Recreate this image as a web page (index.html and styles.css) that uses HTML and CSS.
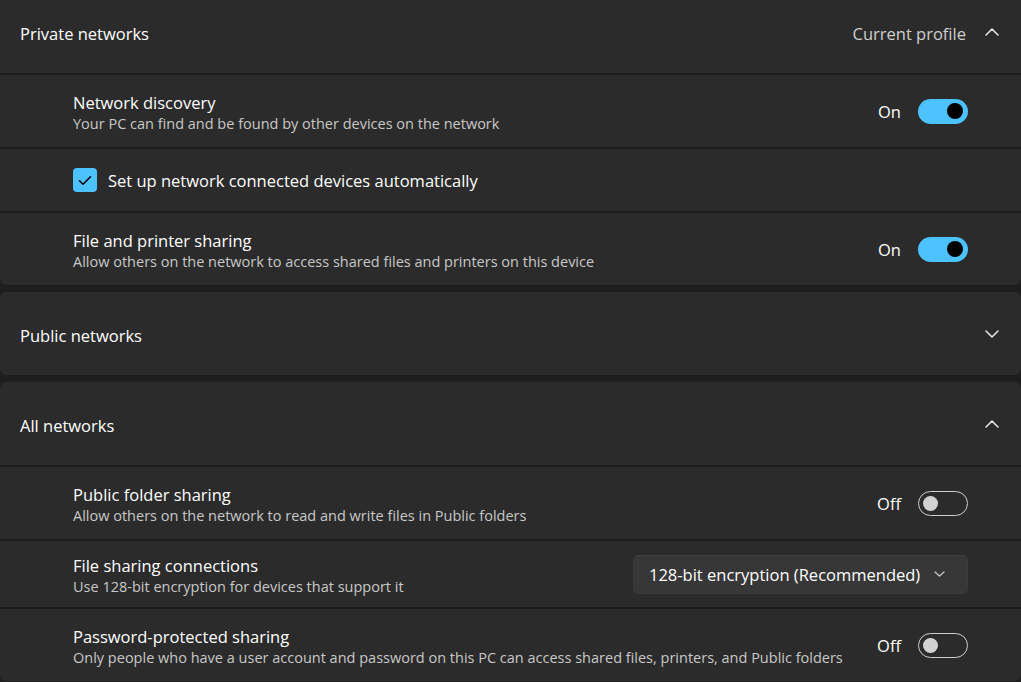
FILE: index.html
```html
<!DOCTYPE html>
<html lang="en">
<head>
<meta charset="utf-8">
<title>Advanced sharing settings</title>
<link rel="stylesheet" href="styles.css">
</head>
<body>
<main class="page">
  <section class="card">
    <div class="card-header">
      <span class="header-title">Private networks</span>
      <span class="header-meta">Current profile</span>
      <svg class="chev" width="14" height="8" viewBox="0 0 14 8"><path d="M1 7 L7 1 L13 7" fill="none" stroke="#e8e8e8" stroke-width="1.5" stroke-linecap="round" stroke-linejoin="round"/></svg>
    </div>
    <div class="row">
      <div class="row-text">
        <div class="row-title">Network discovery</div>
        <div class="row-desc">Your PC can find and be found by other devices on the network</div>
      </div>
      <span class="state">On</span>
      <span class="toggle on"><span class="knob"></span></span>
    </div>
    <div class="row row-check">
      <span class="checkbox"><svg width="14" height="11" viewBox="0 0 14 11"><path d="M1.5 5.8 L5 9.2 L12.5 1.8" fill="none" stroke="#000" stroke-width="1.6" stroke-linecap="round" stroke-linejoin="round"/></svg></span>
      <span class="check-label">Set up network connected devices automatically</span>
    </div>
    <div class="row">
      <div class="row-text">
        <div class="row-title">File and printer sharing</div>
        <div class="row-desc">Allow others on the network to access shared files and printers on this device</div>
      </div>
      <span class="state">On</span>
      <span class="toggle on"><span class="knob"></span></span>
    </div>
  </section>

  <section class="card">
    <div class="card-header">
      <span class="header-title">Public networks</span>
      <svg class="chev" width="14" height="8" viewBox="0 0 14 8"><path d="M1 1 L7 7 L13 1" fill="none" stroke="#e8e8e8" stroke-width="1.5" stroke-linecap="round" stroke-linejoin="round"/></svg>
    </div>
  </section>

  <section class="card">
    <div class="card-header">
      <span class="header-title">All networks</span>
      <svg class="chev" width="14" height="8" viewBox="0 0 14 8"><path d="M1 7 L7 1 L13 7" fill="none" stroke="#e8e8e8" stroke-width="1.5" stroke-linecap="round" stroke-linejoin="round"/></svg>
    </div>
    <div class="row">
      <div class="row-text">
        <div class="row-title">Public folder sharing</div>
        <div class="row-desc">Allow others on the network to read and write files in Public folders</div>
      </div>
      <span class="state">Off</span>
      <span class="toggle off"><span class="knob"></span></span>
    </div>
    <div class="row row-mid">
      <div class="row-text">
        <div class="row-title">File sharing connections</div>
        <div class="row-desc">Use 128-bit encryption for devices that support it</div>
      </div>
      <div class="select">
        <span>128-bit encryption (Recommended)</span>
        <svg width="11" height="6" viewBox="0 0 11 6"><path d="M1 1 L5.5 5 L10 1" fill="none" stroke="#c8c8c8" stroke-width="1.2" stroke-linecap="round" stroke-linejoin="round"/></svg>
      </div>
    </div>
    <div class="row">
      <div class="row-text">
        <div class="row-title">Password-protected sharing</div>
        <div class="row-desc">Only people who have a user account and password on this PC can access shared files, printers, and Public folders</div>
      </div>
      <span class="state">Off</span>
      <span class="toggle off"><span class="knob"></span></span>
    </div>
  </section>
</main>
</body>
</html>
```

FILE: styles.css
```css
html, body {
  margin: 0;
  padding: 0;
  background: #1e1e1e;
  height: 100%;
  overflow: hidden;
}

body {
  font-family: "Open Sans", "Noto Sans", sans-serif;
  color: #ffffff;
}

.page {
  display: flex;
  flex-direction: column;
  gap: 7px;
  margin-top: -10px;
}

.card {
  display: flex;
  flex-direction: column;
  gap: 2px;
  background: #1c1c1c;
  border-radius: 6px;
  overflow: hidden;
}

.card-header {
  display: flex;
  align-items: center;
  height: 83px;
  padding: 0 22px 0 20px;
  background: #2b2b2b;
}

.header-title {
  flex: 1;
  font-size: 16.5px;
  padding-top: 4px;
}

.header-meta {
  font-size: 16.5px;
  color: #cfcfcf;
  margin-right: 19px;
  padding-top: 4px;
}

.chev {
  display: block;
}

.row {
  display: flex;
  align-items: center;
  height: 72px;
  padding: 0 53px 0 73px;
  background: #2b2b2b;
}

.row-mid {
  height: 66px;
}

.row-check {
  height: 62px;
}

.row-text {
  flex: 1;
  display: flex;
  flex-direction: column;
  padding-top: 3px;
}

.row-title {
  font-size: 16.5px;
  line-height: 22px;
}

.row-desc {
  font-size: 14.5px;
  line-height: 20px;
  color: #c8c8c8;
}

.state {
  font-size: 16.5px;
  margin-right: 17px;
  padding-top: 1px;
}

.toggle {
  box-sizing: border-box;
  width: 50px;
  height: 25px;
  border-radius: 13px;
  display: flex;
  align-items: center;
}

.toggle.on {
  background: #4cc2ff;
  justify-content: flex-end;
  padding-right: 5px;
}

.toggle.on .knob {
  width: 16px;
  height: 16px;
  border-radius: 50%;
  background: #000;
}

.toggle.off {
  border: 1.5px solid #cfcfcf;
  padding-left: 4px;
}

.toggle.off .knob {
  width: 15px;
  height: 15px;
  border-radius: 50%;
  background: #d2d2d2;
}

.checkbox {
  width: 24px;
  height: 24px;
  border-radius: 4px;
  background: #4cc2ff;
  display: flex;
  align-items: center;
  justify-content: center;
  margin-right: 11px;
}

.check-label {
  font-size: 16.5px;
}

.select {
  box-sizing: border-box;
  width: 335px;
  height: 39px;
  display: flex;
  align-items: center;
  justify-content: space-between;
  padding: 0 22px 0 15px;
  background: #373737;
  border: 1px solid #3a3a3a;
  border-top-color: #3f3f3f;
  border-radius: 5px;
  font-size: 16.5px;
}
```
